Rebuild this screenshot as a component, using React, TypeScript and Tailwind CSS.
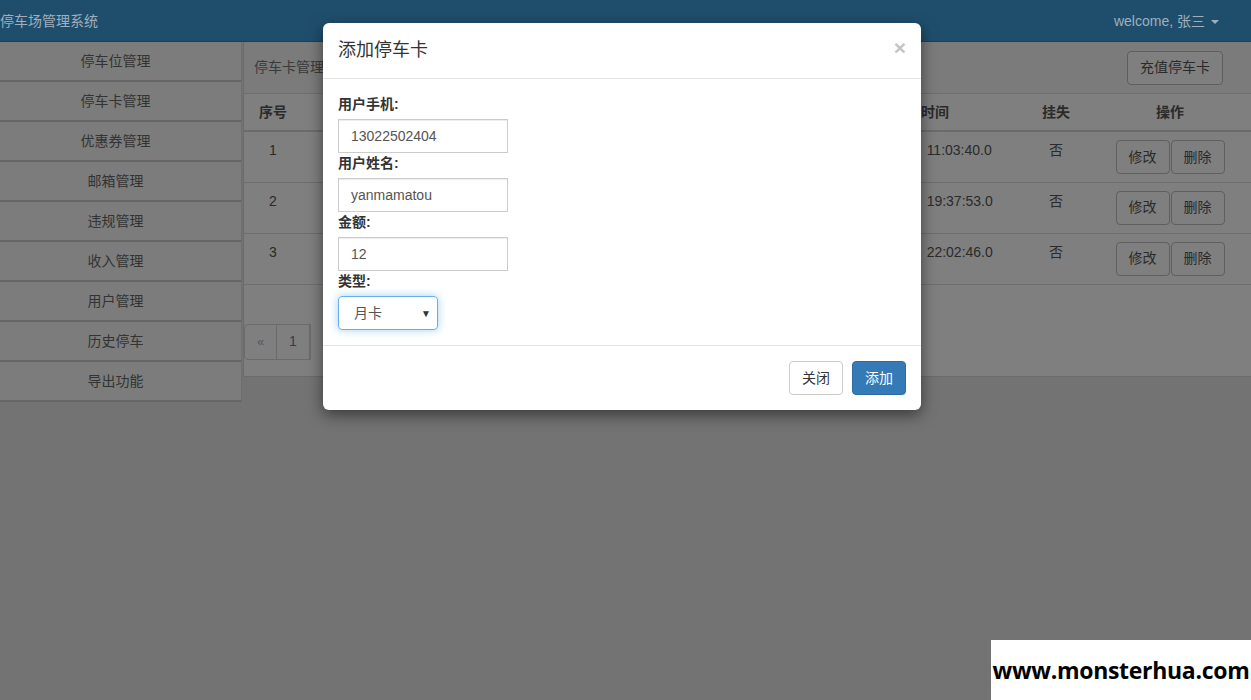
const menu = ["停车位管理", "停车卡管理", "优惠券管理", "邮箱管理", "违规管理", "收入管理", "用户管理", "历史停车", "导出功能"];

const rows = [
  { id: 1, phone: "13022502404", name: "yanmamatou", money: "12", type: "月卡", date: "2018-04-25", time: "11:03:40.0" },
  { id: 2, phone: "13800138000", name: "zhangsan", money: "100", type: "年卡", date: "2018-04-26", time: "19:37:53.0" },
  { id: 3, phone: "13912345678", name: "lisi", money: "50", type: "月卡", date: "2018-04-27", time: "22:02:46.0" },
];

function DimButton({ children }: { children: React.ReactNode }) {
  return (
    <button className="h-[34px] px-3 rounded border border-[#5f5f5f] bg-[#7f7f7f] text-[14px] text-[#2a2a2a]">
      {children}
    </button>
  );
}

function Field({ label, value }: { label: string; value: string }) {
  return (
    <div>
      <div className="text-[14px] font-bold leading-[20px] mb-[5px] text-[#333]">{label}</div>
      <div className="w-[170px] h-[34px] border border-[#ccc] px-3 flex items-center text-[14px] text-[#555] shadow-[inset_0_1px_1px_rgba(0,0,0,0.075)]">
        {value}
      </div>
    </div>
  );
}

export default function App() {
  return (
    <div className="relative w-[1251px] h-[700px] overflow-hidden bg-[#737373] font-['Liberation_Sans','Noto_Sans_CJK_SC',sans-serif]">
      {/* navbar */}
      <div className="h-[42px] bg-[#1f4e6d] border-b border-[#1a4057] flex items-center justify-between pr-[32px] pt-[2px]">
        <span className="text-[14px] text-[#9fb0bd]">停车场管理系统</span>
        <span className="text-[14px] text-[#9fb0bd] flex items-center gap-[6px]">
          welcome, 张三
          <span className="inline-block w-0 h-0 border-l-[4px] border-r-[4px] border-t-[4px] border-l-transparent border-r-transparent border-t-[#9fb0bd]" />
        </span>
      </div>

      <div className="flex">
        {/* sidebar */}
        <div className="w-[242px] flex flex-col">
          {menu.map((m) => (
            <div
              key={m}
              className="h-[40px] bg-[#7c7c7c] border-b-2 border-[#666] border-r border-r-[#6f6f6f] flex items-center justify-center pr-[10px] text-[14px] text-[#333]"
            >
              {m}
            </div>
          ))}
        </div>

        {/* content panel */}
        <div className="ml-[1px] flex-1 h-[335px] bg-[#7f7f7f] border-l border-b border-[#6b6b6b]">
          <div className="h-[52px] bg-[#7b7b7b] border-b border-[#6e6e6e] flex items-center justify-between pl-[10px] pr-[28px]">
            <span className="text-[14px] text-[#3a3a3a]">停车卡管理</span>
            <button className="h-[34px] px-3 rounded border border-[#5f5f5f] bg-[#7f7f7f] text-[14px] text-[#2a2a2a]">
              充值停车卡
            </button>
          </div>
          <table className="w-full table-fixed border-collapse text-[14px] text-[#2a2a2a]">
            <colgroup>
              <col className="w-[58px]" />
              <col className="w-[130px]" />
              <col className="w-[130px]" />
              <col className="w-[110px]" />
              <col className="w-[90px]" />
              <col />
              <col className="w-[204px]" />
              <col className="w-[66px]" />
              <col className="w-[162px]" />
            </colgroup>
            <thead>
              <tr className="h-[37px] border-b-2 border-[#6b6b6b]">
                {["序号", "卡号", "用户手机", "用户姓名", "金额", "类型", "办理时间", "挂失", "操作"].map((h) => (
                  <th key={h} className="font-bold text-center px-2">{h}</th>
                ))}
              </tr>
            </thead>
            <tbody>
              {rows.map((r) => (
                <tr key={r.id} className="h-[51px] border-b border-[#6e6e6e]">
                  <td className="align-top text-center px-2 pt-[8px] leading-[20px]">{r.id}</td>
                  <td className="align-top text-center px-2 pt-[8px] leading-[20px]">{1000 + r.id}</td>
                  <td className="align-top text-center px-2 pt-[8px] leading-[20px]">{r.phone}</td>
                  <td className="align-top text-center px-2 pt-[8px] leading-[20px]">{r.name}</td>
                  <td className="align-top text-center px-2 pt-[8px] leading-[20px]">{r.money}</td>
                  <td className="align-top text-center px-2 pt-[8px] leading-[20px]">{r.type}</td>
                  <td className="align-top text-left pl-[10px] pt-[8px] leading-[20px] whitespace-nowrap">
                    <span>{r.date}</span>
                    <span className="ml-[26px]">{r.time}</span>
                  </td>
                  <td className="align-top text-center px-2 pt-[8px] leading-[20px]">否</td>
                  <td className="align-top text-center px-2 pt-[8px]">
                    <div className="flex justify-center gap-[1px]">
                      <DimButton>修改</DimButton>
                      <DimButton>删除</DimButton>
                    </div>
                  </td>
                </tr>
              ))}
            </tbody>
          </table>
          <div className="pt-[39px] flex">
            <div className="flex border border-[#6b6b6b] rounded-l">
              <span className="w-[32px] h-[34px] flex items-center justify-center text-[13px] text-[#4f5962] border-r border-[#6b6b6b]">«</span>
              <span className="w-[33px] h-[34px] flex items-center justify-center text-[14px] text-[#2f3e4b] border-r border-[#6b6b6b]">1</span>
            </div>
          </div>
        </div>
      </div>

      {/* modal dialog */}
      <div className="absolute left-[323px] top-[23px] w-[598px] bg-white rounded-[6px] shadow-[0_5px_15px_rgba(0,0,0,0.5)]">
        <div className="h-[56px] px-[15px] flex items-center justify-between border-b border-[#e5e5e5]">
          <span className="text-[18px] text-[#333]">添加停车卡</span>
          <span className="text-[21px] font-bold text-[#c4c4c4] leading-none -mt-[6px]">×</span>
        </div>
        <div className="p-[15px] flex flex-col">
          <Field label="用户手机:" value="13022502404" />
          <Field label="用户姓名:" value="yanmamatou" />
          <Field label="金额:" value="12" />
          <div>
            <div className="text-[14px] font-bold leading-[20px] mb-[5px] text-[#333]">类型:</div>
            <div className="w-[100px] h-[34px] rounded border border-[#66afe9] shadow-[0_0_8px_rgba(102,175,233,0.6)] pl-[15px] pr-[6px] flex items-center justify-between text-[14px] text-[#555]">
              月卡
              <span className="text-[10px] text-[#333]">▼</span>
            </div>
          </div>
        </div>
        <div className="border-t border-[#e5e5e5] p-[15px] flex justify-end gap-[9px]">
          <button className="h-[34px] w-[54px] rounded border border-[#ccc] bg-white text-[14px] text-[#333]">关闭</button>
          <button className="h-[34px] w-[54px] rounded border border-[#2e6da4] bg-[#337ab7] text-[14px] text-white">添加</button>
        </div>
      </div>

      {/* watermark */}
      <div className="absolute right-0 bottom-0 w-[260px] h-[60px] bg-white flex items-center justify-center">
        <span className="font-['Open_Sans',sans-serif] font-bold text-[23px] text-black tracking-[-0.3px]">www.monsterhua.com</span>
      </div>
    </div>
  );
}
